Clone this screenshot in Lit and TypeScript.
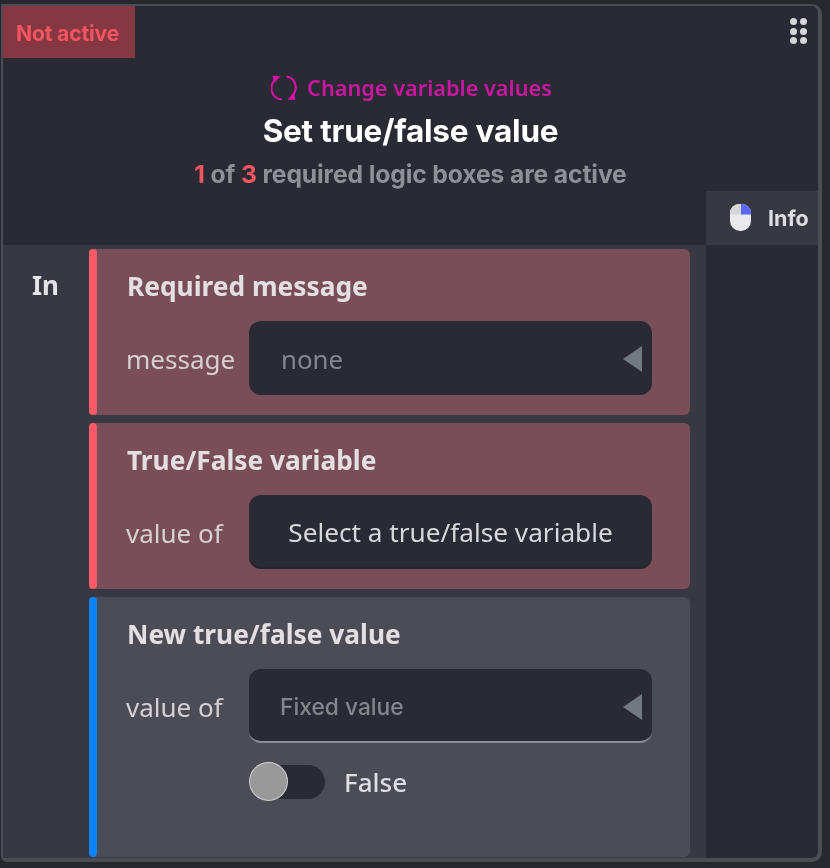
import { LitElement, html, css } from "lit";
import { customElement } from "lit/decorators.js";

@customElement("app-root")
export class AppRoot extends LitElement {
  static styles = css`
    :host { display: block; width: 830px; height: 868px; background: #27282e; box-sizing: border-box; padding: 4px 8px 6px 1px; font-family: "Noto Sans", sans-serif; }
    .card { position: relative; box-sizing: border-box; height: 858px; border: 2px solid #4b4c56; border-top-width: 2.5px; border-right-width: 4px; border-bottom-width: 4px; border-radius: 0 10px 10px 6px; background: #292a33; display: flex; flex-direction: column; overflow: hidden; filter: blur(0.5px); }
    .status { position: absolute; left: 0; top: 0; width: 132px; height: 52px; box-sizing: border-box; background: #853742; color: #f25560; font: 700 21.2px/54px Inter, sans-serif; padding-left: 13px; letter-spacing: -0.2px; }
    .grip { position: absolute; left: 787px; top: 12px; width: 17px; height: 26px; display: grid; grid-template-columns: 7px 7px; grid-auto-rows: 7px; gap: 2.5px 3px; }
    .grip i { background: #d6d6da; border-radius: 50%; }
    .head { height: 238.5px; flex: none; display: flex; flex-direction: column; align-items: center; padding-top: 65.5px; box-sizing: border-box; position: relative; }
    .kind { display: flex; align-items: center; gap: 10px; color: #c9179f; font-size: 21.7px; font-weight: 600; line-height: 32px; height: 32px; margin-left: 2px; }
    .title { color: #fff; font: 700 31.5px/36px Inter, sans-serif; margin-top: 9px; letter-spacing: -0.2px; }
    .count { color: #8f8f96; font: 700 24.7px/30px Inter, sans-serif; margin-top: 10px; letter-spacing: -0.13px; }
    .count b { color: #f25560; font-weight: 700; }
    .tab { position: absolute; right: 0; top: 184.5px; width: 112px; height: 54px; background: #373841; display: flex; align-items: center; gap: 17px; padding-left: 24px; box-sizing: border-box; color: #dedee2; font: 700 21.5px Inter, sans-serif; }
    .main { flex: 1; display: flex; min-height: 0; }
    .in { width: 703px; flex: none; background: #373841; display: flex; box-sizing: border-box; padding: 4px 16px 0 0; }
    .lbl { width: 85px; flex: none; text-align: center; color: #e4e4e8; font-size: 26px; font-weight: 700; line-height: 34px; padding-top: 19px; box-sizing: border-box; margin-right: 1px; }
    .boxes { flex: 1; display: flex; flex-direction: column; gap: 8px; }
    .box { border-radius: 6px; background: #794e58; height: 166px; display: flex; }
    .box.blue { background: #4b4c56; height: 260px; }
    .bar { width: 8px; flex: none; border-radius: 4px; background: #ff5a67; }
    .blue .bar { background: #0a84ff; }
    .body { flex: 1; min-width: 0; box-sizing: border-box; padding: 19px 38px 0 30px; }
    .name { color: #e4dfe2; font-size: 26.3px; font-weight: 700; line-height: 36px; height: 36px; }
    .row { display: flex; align-items: center; margin-top: 17.4px; height: 74px; }
    .row label { width: 122px; flex: none; color: #d6d0d4; font-size: 26px; line-height: 34px; padding-top: 3px; margin-left: -1px; margin-right: 1px; }
    .field { flex: 1; height: 74px; border-radius: 12px; background: #292a33; display: flex; align-items: center; box-sizing: border-box; padding: 2px 10px 0 32px; color: #85858c; font-size: 25.8px; }
    .field .arrow { margin-left: auto; width: 0; height: 0; border-style: solid; border-width: 13px 19px 13px 0; border-color: transparent #727980 transparent transparent; }
    .field.btn { justify-content: center; padding: 3px 0 0; color: #d8d8dc; font-size: 26.2px; border-bottom: 2px solid #232329; }
    .field.inter { font: 500 22.8px Inter, sans-serif; border-bottom: 2px solid #8c8d93; padding: 4px 10px 0 31px; }
    .toggle { display: flex; align-items: center; margin: 21px 0 0 122px; gap: 19px; color: #dedee2; font-size: 26px; font-weight: 500; }
    .switch { width: 76px; height: 34px; border-radius: 17px; background: #292a33; position: relative; }
    .switch::before { content: ""; position: absolute; left: 1px; top: -2px; width: 37px; height: 37px; border-radius: 50%; background: #999; box-shadow: 0 0 0 1px #d0d0d0; }
  `;
  render() {
    return html`<div class="card">
      <div class="head">
        <div class="kind">
          <svg width="26" height="26" viewBox="0 0 26 26" fill="none" stroke="#df10ac" stroke-width="2.1">
            <path d="M4.5 5 A11 11 0 0 0 11 24.5" /><path d="M15.5 1.5 A11 11 0 0 1 20.5 21" />
            <path d="M2 1 L9 1.5 L3 7.5Z" fill="#df10ac" stroke-width="0.6" /><path d="M24 24.5 L17 24.5 L23 18Z" fill="#df10ac" stroke-width="0.6" />
          </svg>
          <span>Change variable values</span>
        </div>
        <div class="title">Set true/false value</div>
        <div class="count"><b>1</b> of <b>3</b> required logic boxes are active</div>
        <div class="tab">
          <svg width="21" height="27" viewBox="0 0 21 27">
            <path d="M0 17 V9 A9 9 0 0 1 9 0 H12 A9 9 0 0 1 21 9 V17 A10 10 0 0 1 11 27 H10 A10 10 0 0 1 0 17Z" fill="#eaeaee" />
            <path d="M0 9 A9 9 0 0 1 9 0 H11 V10.5 H0Z" fill="#d6d6da" /><path d="M11 0 H12 A9 9 0 0 1 21 9 V10.5 H11Z" fill="#5a68ff" />
          </svg>
          <span>Info</span>
        </div>
      </div>
      <div class="main">
        <div class="in">
          <div class="lbl">In</div>
          <div class="boxes">
            <div class="box"><span class="bar"></span><div class="body">
              <div class="name">Required message</div>
              <div class="row"><label>message</label><div class="field">none<span class="arrow"></span></div></div>
            </div></div>
            <div class="box"><span class="bar"></span><div class="body">
              <div class="name">True/False variable</div>
              <div class="row"><label>value of</label><div class="field btn">Select a true/false variable</div></div>
            </div></div>
            <div class="box blue"><span class="bar"></span><div class="body">
              <div class="name">New true/false value</div>
              <div class="row"><label>value of</label><div class="field inter">Fixed value<span class="arrow"></span></div></div>
              <div class="toggle"><span class="switch"></span><span>False</span></div>
            </div></div>
          </div>
        </div>
      </div>
      <div class="status">Not active</div>
      <div class="grip"><i></i><i></i><i></i><i></i><i></i><i></i></div>
    </div>`;
  }
}
